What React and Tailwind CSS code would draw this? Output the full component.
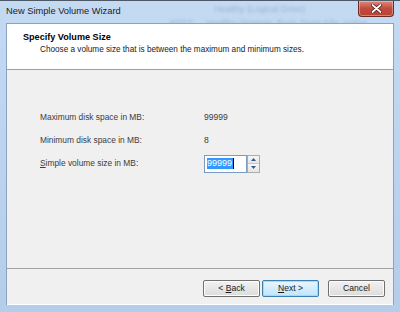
import React from 'react';

const font = { fontFamily: '"Liberation Sans", Arial, sans-serif' };

function Row({ label, children, accessKey }) {
	return (
		<div className="flex items-center h-[23px]">
			<div className="w-[164px] text-[8.4px] text-[#3c3c3c]">
				{ accessKey ? (
					<>
						<span className="underline">{ label[0] }</span>
						{ label.slice(1) }
					</>
				) : label }
			</div>
			<div className="flex items-center">{ children }</div>
		</div>
	);
}

function Btn({ children, primary }) {
	return (
		<div
			className={
				'h-[17px] flex items-center justify-center rounded-[2px] border text-[8.6px] text-[#1a1a1a] ' +
				( primary
					? 'border-[#3c7fb1] bg-gradient-to-b from-[#eaf6fd] to-[#bee6fd] shadow-[inset_0_0_0_1px_#a7d9f5]'
					: 'border-[#707070] bg-gradient-to-b from-[#f2f2f2] to-[#dcdcdc] shadow-[inset_0_0_0_1px_#fcfcfc]' )
			}
		>
			{ children }
		</div>
	);
}

export default function App() {
	return (
		<div className="w-[400px] h-[312px] flex flex-col bg-gradient-to-b from-[#c4daf3] to-[#b3cdea] border-t border-[#4d5966] relative overflow-hidden" style={ font }>
			{/* glass bleed-through behind the title bar */}
			<div className="absolute left-[150px] top-[2px] text-[9px] text-[#7f97b8] blur-[1.4px] opacity-60 whitespace-nowrap">
				<div className="pl-[64px]">Healthy (Logical Drive)</div>
				<div className="pl-[20px]">NTFS&nbsp;&nbsp;&nbsp;&nbsp;&nbsp;Healthy (System, Boot, Page File, Active</div>
			</div>

			<div className="h-[22px] flex items-start justify-between relative">
				<div className="pl-[6px] pt-[4px] text-[9.3px] text-[#1b1b1b]">New Simple Volume Wizard</div>
				<div className="mr-[6px] w-[36px] h-[16px] rounded-b-[4px] border border-t-0 border-[#6b2a22] bg-gradient-to-b from-[#dc8a7c] via-[#c24a3e] to-[#b84432] flex items-center justify-center shadow-[inset_0_0_0_1px_rgba(255,255,255,0.35)]">
					<svg width="11" height="9" viewBox="0 0 11 9">
						<path d="M1.5 1 L9.5 8 M9.5 1 L1.5 8" stroke="#3a1510" strokeWidth="3.2" strokeLinecap="round" />
						<path d="M1.5 1 L9.5 8 M9.5 1 L1.5 8" stroke="#ffffff" strokeWidth="1.8" strokeLinecap="round" />
					</svg>
				</div>
			</div>

			<div className="mx-[6px] h-[282px] border border-[#8da2bd] bg-[#f0f0f0] flex flex-col relative">
				<div className="h-[46px] bg-white border-b border-[#a0a0a0] pl-[16px] pt-[7px]">
					<div className="text-[9.1px] font-bold text-black leading-[12px]">Specify Volume Size</div>
					<div className="pl-[17px] text-[8.2px] text-[#1a1a1a] leading-[12px] mt-[1px]">
						Choose a volume size that is between the maximum and minimum sizes.
					</div>
				</div>

				<div className="flex-1 pl-[33px] pt-[36px]">
					<Row label="Maximum disk space in MB:">
						<span className="text-[8.6px] text-[#3c3c3c]">99999</span>
					</Row>
					<Row label="Minimum disk space in MB:">
						<span className="text-[8.6px] text-[#3c3c3c]">8</span>
					</Row>
					<Row label="Simple volume size in MB:" accessKey>
						<div className="flex">
							<div className="w-[43px] h-[18px] border border-[#7a9cc4] bg-white flex items-center pl-[2px]">
								<span className="bg-[#3399ff] text-white text-[9px] leading-[11px] pr-[1px]">99999</span>
								<span className="w-px h-[11px] bg-black" />
							</div>
							<div className="w-[13px] h-[18px] border border-[#acacac] bg-[#ededed] flex flex-col">
								<div className="flex-1 flex items-center justify-center border-b border-[#c8c8c8] bg-gradient-to-b from-[#f7f7f7] to-[#e4e4e4]">
									<svg width="5" height="3" viewBox="0 0 5 3"><path d="M0 3 L2.5 0 L5 3 Z" fill="#3a5a86" /></svg>
								</div>
								<div className="flex-1 flex items-center justify-center bg-gradient-to-b from-[#f7f7f7] to-[#e4e4e4]">
									<svg width="5" height="3" viewBox="0 0 5 3"><path d="M0 0 L2.5 3 L5 0 Z" fill="#3a5a86" /></svg>
								</div>
							</div>
						</div>
					</Row>
				</div>

				<div className="border-t border-[#a0a0a0] shadow-[0_1px_0_#ffffff] h-[36px] flex items-start pt-[11px] pl-[196px]">
					<div className="w-[57px]">
						<Btn>&lt;{ '\u00a0' }<span className="underline">B</span>ack</Btn>
					</div>
					<div className="w-[57px] ml-[2px]">
						<Btn primary><span className="underline">N</span>ext{ '\u00a0' }&gt;</Btn>
					</div>
					<div className="w-[57px] ml-[9px]">
						<Btn>Cancel</Btn>
					</div>
				</div>
			</div>
			<div className="flex-1" />
		</div>
	);
}
